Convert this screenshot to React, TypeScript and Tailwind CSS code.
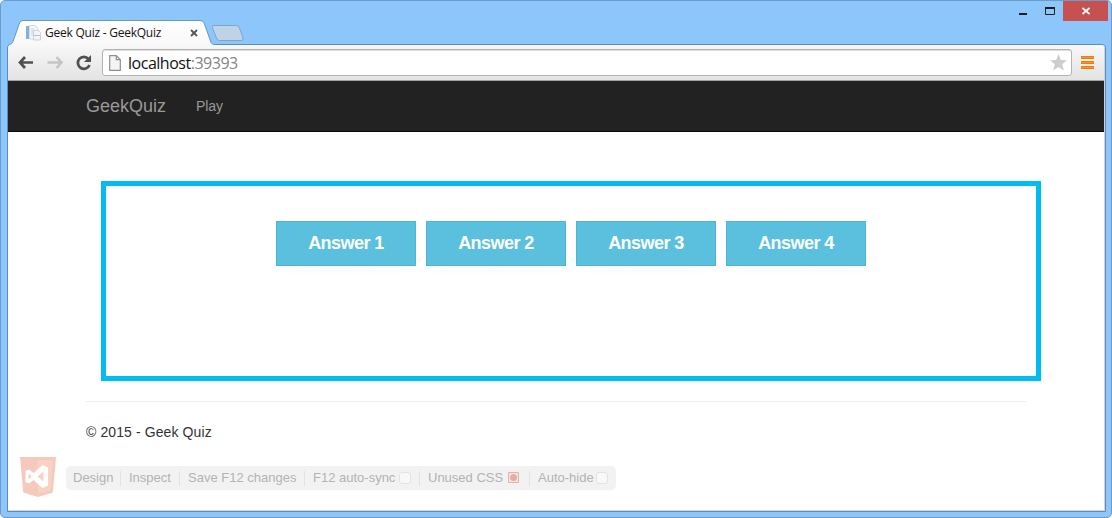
import React from "react";

const answers = ["Answer 1", "Answer 2", "Answer 3", "Answer 4"];

function Tab() {
  return (
    <div className="relative ml-[2px] h-[26px] w-[206px]">
      <svg className="absolute left-0 top-0" width="206" height="26" viewBox="0 0 206 26">
        <defs>
          <linearGradient id="tab" x1="0" y1="0" x2="0" y2="1">
            <stop offset="0" stopColor="#ffffff" />
            <stop offset="1" stopColor="#f8f8f8" />
          </linearGradient>
        </defs>
        <path
          d="M0 26V24.5C2 24.5 3.2 23.5 4 21.5L10 4.5C11 1.8 12 1 14 1H191C193.500 1 194.500 2 195.500 4.500L201.500 21.500C202.200 23.500 203.300 24.500 206 24.500V26Z"
          fill="url(#tab)"
        />
        <path
          d="M0 24.5C2 24.5 3.2 23.5 4 21.5L10 4.500C11 1.5 12 .5 14 .5H191C193.500 .5 194.500 1.500 195.500 4L201.500 21C202.200 23.500 203.300 24.500 206 24.500"
          fill="none"
          stroke="#6b98c0"
        />
      </svg>
      <div className="relative flex h-[26px] items-center pl-[16px]">
        <svg width="16" height="16" viewBox="0 0 16 16">
          <path d="M1 1h3v13H1z" fill="#7db4dc" />
          <path d="M4.500 .5h6l2.500 3V14H4.500z" fill="#f4f5f8" stroke="#d6d9e2" />
          <path d="M6 4h3M6 6h3M6 8h2M6 10h2" stroke="#cdd2de" />
          <path d="M8.500 5.500h5l2 2V15h-7z" fill="#f3f4f8" stroke="#cdd1dd" />
          <path d="M9 10.500h6" stroke="#b8becd" />
        </svg>
        <span className="ml-[4px] w-[120px] whitespace-nowrap font-['Open_Sans',sans-serif] text-[12px] leading-[16px] tracking-[-0.24px] text-[#151515]">
          Geek Quiz - GeekQuiz
        </span>
        <svg className="ml-[25px]" width="8" height="8" viewBox="0 0 8 8">
          <path d="M1 1l6 6M7 1L1 7" stroke="#555" strokeWidth="1.8" />
        </svg>
      </div>
    </div>
  );
}

function WindowControls() {
  return (
    <div className="-mr-[2px] ml-auto flex h-[20px] self-start">
      <svg width="55" height="20" viewBox="0 0 55 20">
        <path d="M11 12h8v2h-8z" fill="#1f1f1f" />
        <path d="M37.500 7.500h9v6h-9z" fill="none" stroke="#1f1f1f" />
        <path d="M37 6h10v2H37z" fill="#1f1f1f" />
      </svg>
      <div className="flex h-[20px] w-[45px] items-center justify-center bg-[#c75050]">
        <svg width="8" height="8" viewBox="0 0 8 8">
          <path d="M.5 1l7 6M7.500 1l-7 6" stroke="#fff" strokeWidth="1.700" />
        </svg>
      </div>
    </div>
  );
}

function Toolbar() {
  return (
    <div className="flex h-[36px] shrink-0 border-b border-[#a3a3a3] bg-linear-to-b from-[#f8f8f8] to-[#e3e3e3]">
      <svg className="mt-[9px] ml-[10px] shrink-0" width="76" height="18" viewBox="0 0 76 18">
        <path d="M6.500 3L1.500 8.500l5 5.500M2 8.500h12.500" transform="translate(.5 0)" fill="none" stroke="#505050" strokeWidth="2.700" />
        <path d="M38.500 3l5 5.500-5 5.500M43 8.500H29.500" fill="none" stroke="#c5c5c5" strokeWidth="2.600" />
        <path d="M70.500 5A6 6 0 1 0 71.500 11" fill="none" stroke="#505050" strokeWidth="2.700" />
        <path d="M73 1v7h-7z" fill="#505050" />
      </svg>
      <div className="mt-[4px] ml-[8px] flex h-[27px] w-[970px] shrink-0 items-center rounded-[3px] border border-[#b3b3b3] bg-white shadow-[inset_0_1px_0_#dedede]">
        <svg className="ml-[6px]" width="12" height="16" viewBox="0 0 12 16">
          <path d="M.7.700h6.600l4 4v10.600H.7z" fill="#f4f4f4" stroke="#8f8f8f" strokeWidth="1.200" />
          <path d="M7.300.7v4h4" fill="none" stroke="#8f8f8f" strokeWidth="1.200" />
        </svg>
        <span className="ml-[7px] whitespace-nowrap font-['Open_Sans',sans-serif] text-[16px] leading-[20px] tracking-[-0.48px] text-[#111]">
          localhost<span className="text-[#858585]">:39393</span>
        </span>
        <svg className="ml-auto mr-[4px]" width="17" height="17" viewBox="0 0 17 17">
          <path d="M8.500 0l2.300 6 6.200.3-4.800 4 1.700 6.200-5.400-3.500-5.400 3.500 1.700-6.200L0 6.300 6.200 6z" fill="#cdcdcd" />
        </svg>
      </div>
      <svg className="mt-[11px] ml-[9px]" width="13" height="13" viewBox="0 0 13 13">
        <path d="M0 0h13v3H0zM0 5h13v3H0zM0 10h13v3H0z" fill="#f7941d" />
        <path d="M0 .5h13M0 2.500h13M0 5.500h13M0 7.500h13M0 10.500h13M0 12.500h13" stroke="#e8760c" strokeOpacity=".75" />
      </svg>
    </div>
  );
}

function Separator() {
  return <span className="h-[15px] w-px shrink-0 bg-[#e2e2e2]" />;
}

function Check() {
  return <span className="h-[12px] w-[12px] shrink-0 rounded-[3px] border border-[#e3e3e3] bg-[#f8f8f8]" />;
}

function BrowserLinkBar() {
  return (
    <div className="flex pl-[12px]">
      <svg width="36" height="40" viewBox="0 0 36 40">
        <path d="M0 0h36l-3.200 35.500L18 40 3.200 35.500z" fill="#f6c9bd" />
        <path d="M18 3h15l-2.700 30.500L18 37z" fill="#f9d2c1" />
        <path
          fillRule="evenodd"
          d="M22.500 8l5.500 2.500v18L22.500 31l-9-8-4.500 3.500-3.500-1.500V14L9 12.500l4.500 3.500zM23.500 14.500l-6 5 6 5zM8.500 16.500v6l3-3z"
          fill="#fff"
        />
      </svg>
      <div className="mt-[9px] ml-[10px] flex h-[24px] w-[550px] items-center rounded-[5px] bg-[#f2f2f2] pl-[7px] font-['Liberation_Sans',sans-serif] text-[13px] leading-[16px] whitespace-nowrap text-[#b3b3b3]">
        <span className="w-[47px]">Design</span>
        <Separator />
        <span className="w-[58px] pl-[8px]">Inspect</span>
        <Separator />
        <span className="w-[124px] pl-[8px]">Save F12 changes</span>
        <Separator />
        <span className="w-[94px] pl-[8px]">F12 auto-sync</span>
        <Check />
        <span className="w-[8px]" />
        <Separator />
        <span className="w-[88px] pl-[8px]">Unused CSS</span>
        <svg width="12" height="12" viewBox="0 0 12 12">
          <path d="M.5.500h10v10H.5z" fill="#f5e6e2" stroke="#e3b3a8" />
          <circle cx="5.500" cy="5.500" r="3.500" fill="#e3aea3" />
        </svg>
        <span className="w-[9px]" />
        <Separator />
        <span className="w-[66px] pl-[8px]">Auto-hide</span>
        <Check />
      </div>
    </div>
  );
}

function Page() {
  return (
    <div className="flex grow flex-col bg-white font-['Liberation_Sans',sans-serif]">
      <nav className="flex h-[51px] shrink-0 items-center border-b border-[#080808] bg-[#222] pl-[78px] text-[#999]">
        <span className="w-[110px] text-[18px] leading-[20px]">GeekQuiz</span>
        <span className="text-[14px] leading-[20px] tracking-[-0.1px]">Play</span>
      </nav>
      <main className="mt-[49px] ml-[93px] flex h-[200px] w-[940px] justify-center gap-[10px] border-[5px] border-[#00bcf2] pt-[35px]">
        {answers.map((answer) => (
          <button
            key={answer}
            className="h-[45px] w-[140px] border border-[#46b8da] bg-[#5bc0de] pb-[2px] text-[18px] leading-[24px] font-bold tracking-[-0.55px] text-white"
          >
            {answer}
          </button>
        ))}
      </main>
      <hr className="mt-[20px] ml-[78px] w-[940px] border-t border-[#eee]" />
      <footer className="mt-[20px] ml-[78px] text-[14px] leading-[20px] tracking-[0.1px] text-[#333]">
        © 2015 - Geek Quiz
      </footer>
      <div className="mt-[15px]">
        <BrowserLinkBar />
      </div>
    </div>
  );
}

export default function App() {
  return (
    <div className="h-[518px] w-[1112px] bg-white">
      <div className="flex h-[518px] w-[1112px] flex-col rounded-[5px] border border-[#6b9bc8] bg-[#8cc6fb] pr-[5px] pb-[5px] pl-[6px]">
        <div className="flex h-[43px] shrink-0 items-end">
          <div className="z-10 -mb-[2px]">
            <Tab />
          </div>
          <svg className="mb-[2px] -ml-[4px]" width="34" height="18" viewBox="0 0 34 18">
            <path
              d="M3 1.500H25.500Q27.500 1.500 28.300 3.500L32 14Q32.500 16.500 30 16.500H8.500Q6.500 16.500 5.700 14.500L1.300 3.500Q.8 1.500 3 1.500Z"
              fill="#c0d3e6"
              stroke="#7fa6ca"
            />
          </svg>
          <WindowControls />
        </div>
        <div className="flex grow flex-col rounded-t-[4px] border border-[#5d8cb9]">
          <div className="flex grow flex-col overflow-hidden rounded-t-[3px] border-r border-b border-[#d5d5d5]">
            <Toolbar />
            <Page />
          </div>
        </div>
      </div>
    </div>
  );
}
